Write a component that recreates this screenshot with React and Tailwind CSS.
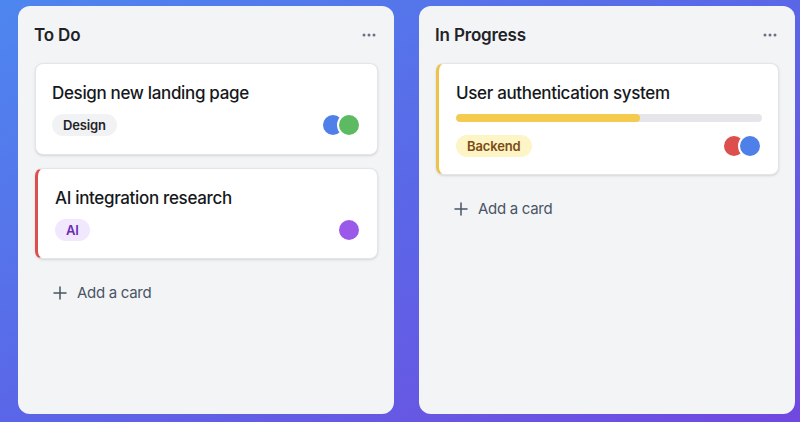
import React from 'react';

const font = { fontFamily: 'Inter, "Noto Sans", sans-serif' };

function Dots() {
    return (
        <svg width="14" height="4" viewBox="0 0 14 4" className="text-gray-500">
            <circle cx="2" cy="2" r="1.5" fill="currentColor" />
            <circle cx="7" cy="2" r="1.5" fill="currentColor" />
            <circle cx="12" cy="2" r="1.5" fill="currentColor" />
        </svg>
    );
}

function Avatars({ colors }) {
    return (
        <div className="flex items-center">
            {colors.map((c, i) => (
                <span
                    key={i}
                    className={`w-6 h-6 rounded-full border-2 border-white ${i > 0 ? '-ml-2' : ''} ${c}`}
                />
            ))}
        </div>
    );
}

function AddCard() {
    return (
        <button className="flex items-center gap-[10px] px-[18px] py-[10px] text-[15px] leading-[22px] tracking-[-0.02em] text-gray-600 text-left">
            <svg width="14" height="14" viewBox="0 0 14 14" className="text-gray-600">
                <path d="M7 1v12M1 7h12" stroke="currentColor" strokeWidth="1.5" strokeLinecap="round" />
            </svg>
            Add a card
        </button>
    );
}

function Column({ title, children }) {
    return (
        <div className="w-[376px] h-[408px] flex-shrink-0 bg-[#f3f4f6] rounded-xl px-4 pt-[17px] flex flex-col">
            <div className="flex items-center justify-between pr-[2px]">
                <h2 className="text-[17px] leading-6 font-semibold tracking-[-0.01em] text-[#1f2328]">{title}</h2>
                <Dots />
            </div>
            <div className="mt-4 flex flex-col gap-[13px] pl-[1px]">{children}</div>
        </div>
    );
}

const titleCls = 'text-[17px] leading-[26px] font-medium tracking-[-0.02em] text-[#16181c]';
const tagCls = 'rounded-full text-[13px] leading-4 font-semibold tracking-[-0.01em] px-[11px] py-[3px]';

export default function App() {
    return (
        <div
            style={font}
            className="w-[800px] h-[422px] overflow-hidden bg-linear-to-br from-[#4d86ef] via-[#5a66e7] to-[#7048df] flex gap-[25px] pl-[18px] pt-[6px]"
        >
            <Column title="To Do">
                <div className="bg-white rounded-lg border border-[#e4e5e8] shadow-sm px-4 pt-4 pb-[17px]">
                    <h3 className={titleCls}>Design new landing page</h3>
                    <div className="mt-[7px] flex items-center justify-between">
                        <span className={`${tagCls} bg-[#f1f2f4] text-[#1f2328]`}>Design</span>
                        <Avatars colors={['bg-[#4f7fe8]', 'bg-[#5cba62]']} />
                    </div>
                </div>
                <div className="bg-white rounded-lg border border-[#e4e5e8] border-l-[3px] border-l-[#dc4f4c] shadow-sm pl-[17px] pr-4 pt-4 pb-4">
                    <h3 className={titleCls}>AI integration research</h3>
                    <div className="mt-[7px] flex items-center justify-between">
                        <span className={`${tagCls} bg-[#f1e8fd] text-[#6b2bb5]`}>AI</span>
                        <Avatars colors={['bg-[#9b59ea]']} />
                    </div>
                </div>
                <AddCard />
            </Column>

            <Column title="In Progress">
                <div className="bg-white rounded-lg border border-[#e4e5e8] border-l-[3px] border-l-[#ecc24a] shadow-sm pl-[17px] pr-4 pt-4 pb-4">
                    <h3 className={titleCls}>User authentication system</h3>
                    <div className="mt-2 h-[8px] rounded-full bg-[#e5e6e9] overflow-hidden">
                        <div className="h-full w-[60%] rounded-full bg-[#f4cb4f]" />
                    </div>
                    <div className="mt-3 flex items-center justify-between">
                        <span className={`${tagCls} bg-[#fdf5c6] text-[#7c4a12]`}>Backend</span>
                        <Avatars colors={['bg-[#dc4f4c]', 'bg-[#4f7fe8]']} />
                    </div>
                </div>
                <AddCard />
            </Column>
        </div>
    );
}
